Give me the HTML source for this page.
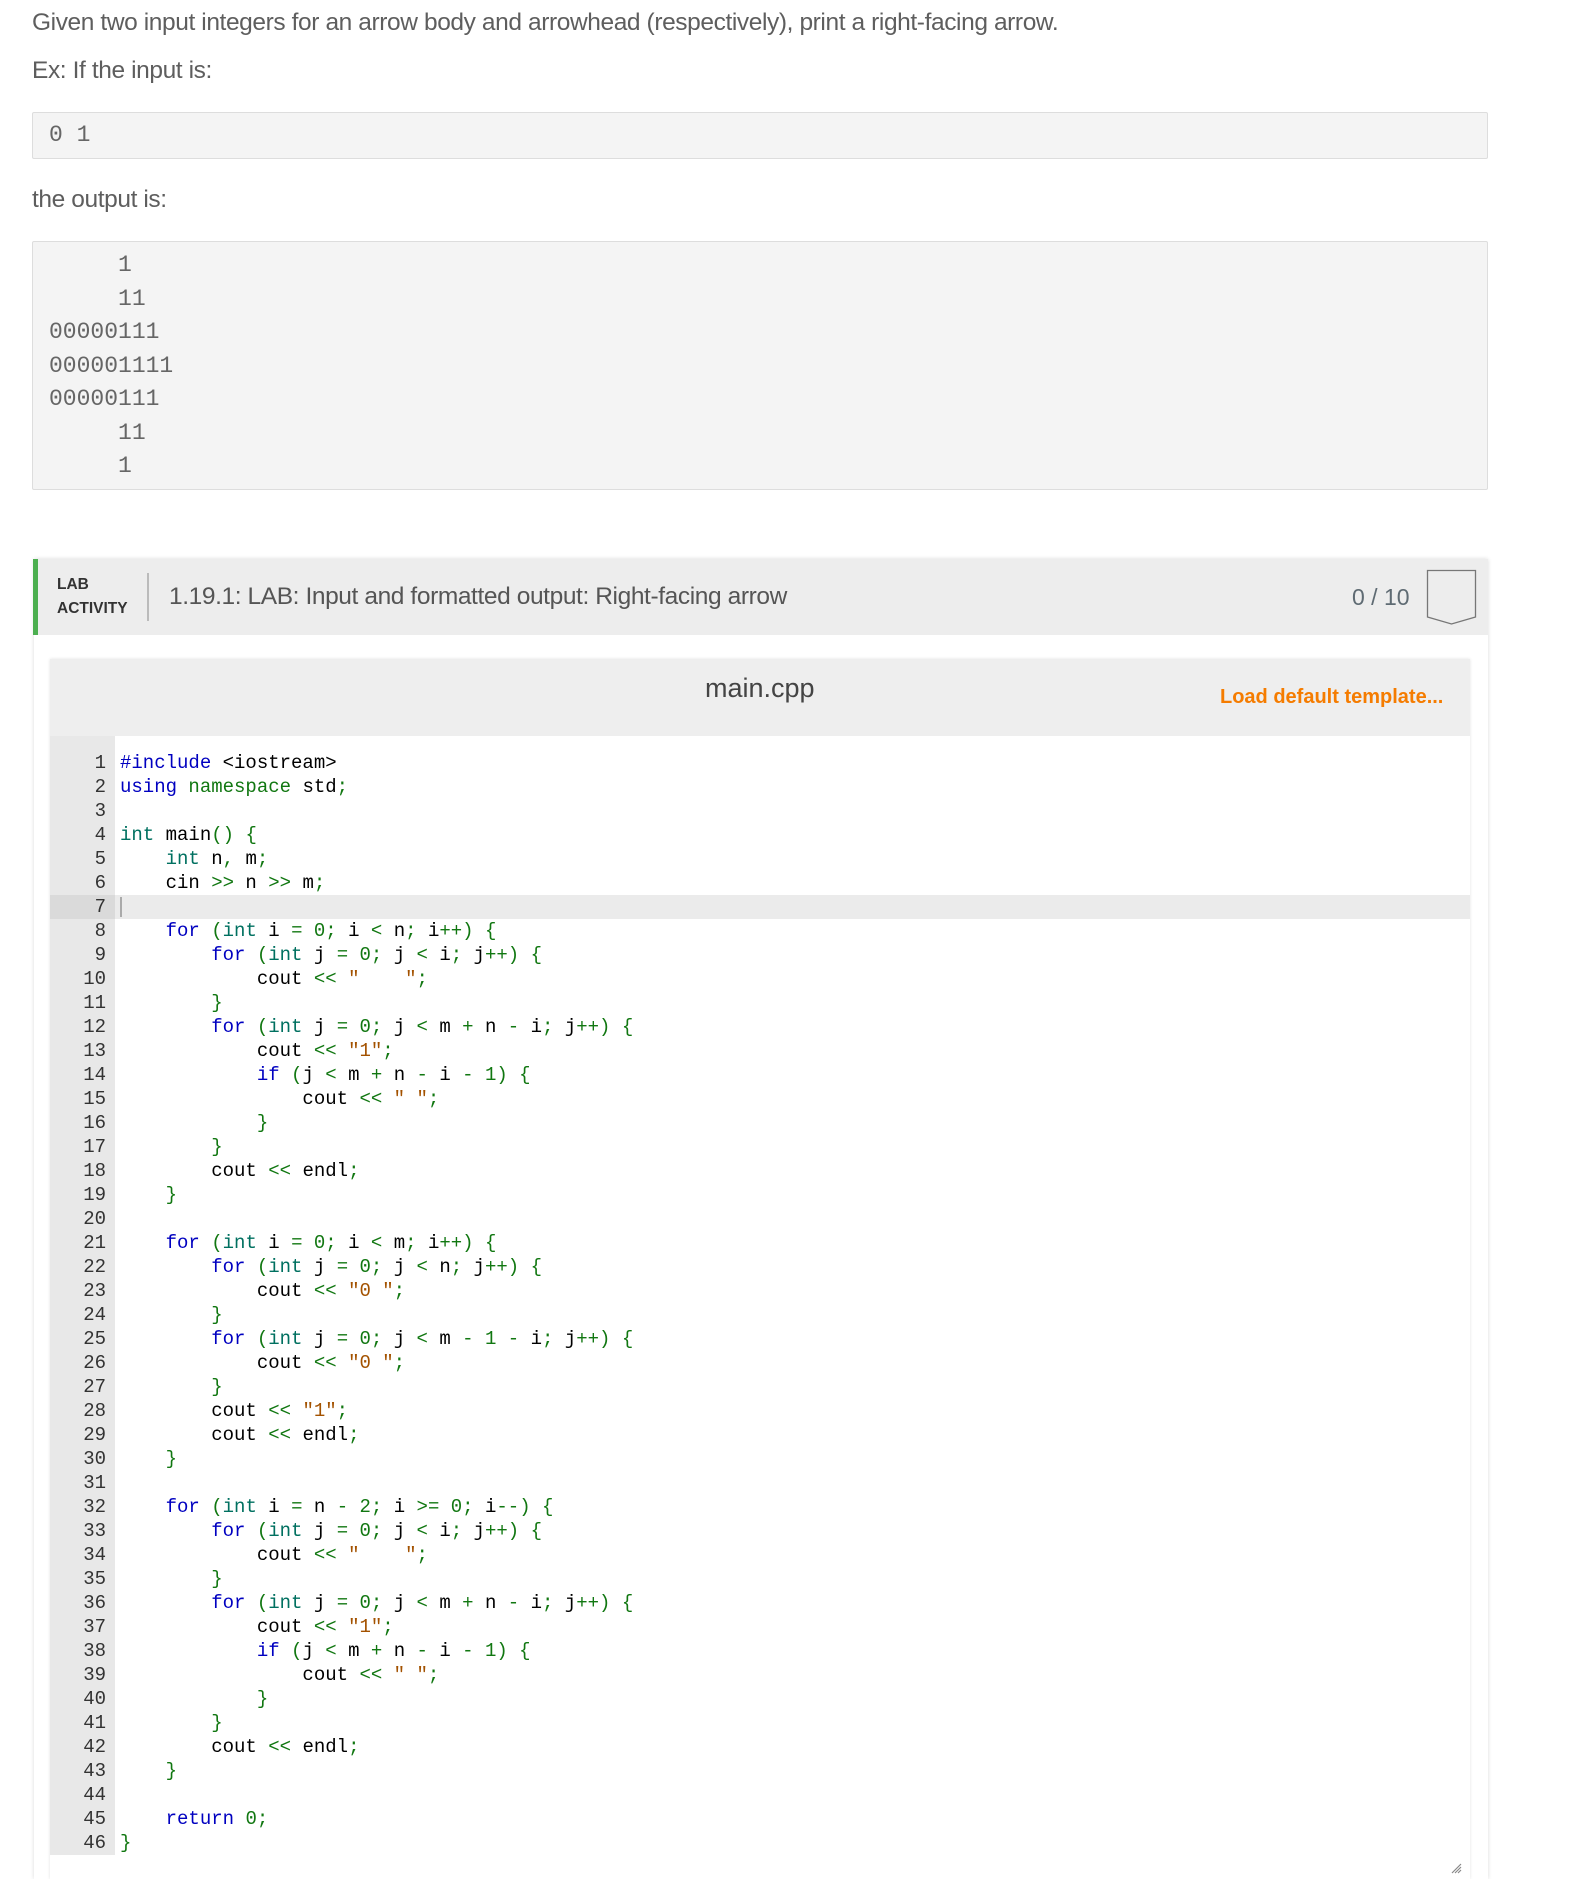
<!DOCTYPE html>
<html><head><meta charset="utf-8"><style>
*{margin:0;padding:0;box-sizing:border-box}
body{width:1572px;height:1879px;background:#fff;font-family:"Liberation Sans",sans-serif;color:#555;position:relative;overflow:hidden}
.abs{position:absolute}
p.t{position:absolute;left:32px;font-size:24.5px;color:#5e5e5e;letter-spacing:-0.4px}
.box{position:absolute;left:32px;width:1456px;background:#f4f4f4;border:1px solid #ddd;border-radius:2px;font-family:"Liberation Mono",monospace;font-size:23px;color:#666}
.out div{height:33.5px;line-height:33.5px;white-space:pre}
.code{position:absolute;font-family:"Liberation Mono",monospace;font-size:19px;color:#000}
.ln{height:24px;line-height:24px;white-space:pre;position:relative}
.ln .n{display:inline-block;width:65px;background:#e8e8e8;text-align:right;padding-right:9px;color:#333}
.ln .c{padding-left:5px}
.b{color:#0000c0}.g{color:#117711}.t{color:#007060}.s{color:#a35200}
</style></head><body>
<p class="t" style="top:9px">Given two input integers for an arrow body and arrowhead (respectively), print a right-facing arrow.</p>
<p class="t" style="top:57px">Ex: If the input is:</p>
<div class="box" style="top:112px;height:47px;line-height:45px;padding-left:16px">0 1</div>
<p class="t" style="top:186px">the output is:</p>
<div class="box out" style="top:241px;height:249px;padding:7px 0 0 16px">
<div>     1</div><div>     11</div><div>00000111</div><div>000001111</div><div>00000111</div><div>     11</div><div>     1</div>
</div>
<div class="abs" style="left:34px;top:559px;width:1454px;height:1320px;box-shadow:0 0 4px rgba(0,0,0,.15)"></div>
<div class="abs" style="left:33px;top:559px;width:1455px;height:76px;background:#ededed;border-left:5px solid #4caf50"></div>
<div class="abs" style="left:57px;top:573px;font-size:15.5px;font-weight:bold;color:#333;line-height:24px">LAB<br>ACTIVITY</div>
<div class="abs" style="left:147px;top:573px;width:2px;height:48px;background:#bbb"></div>
<div class="abs" style="left:169px;top:583px;font-size:24.5px;color:#555;letter-spacing:-0.4px">1.19.1: LAB: Input and formatted output: Right-facing arrow</div>
<div class="abs" style="left:1352px;top:584px;font-size:23px;color:#5f6b73">0 / 10</div>
<svg class="abs" style="left:1424px;top:568px" width="56" height="60"><path d="M3.5 2.5H51.5V49L27.5 56L3.5 49Z" fill="none" stroke="#777" stroke-width="1.3"/></svg>
<div class="abs" style="left:50px;top:659px;width:1420px;height:1220px;box-shadow:0 0 3px rgba(0,0,0,.12)"></div>
<div class="abs" style="left:50px;top:659px;width:1420px;height:77px;background:#eee"></div>
<div class="abs" style="left:705px;top:673px;font-size:27px;color:#444">main.cpp</div>
<div class="abs" style="left:1220px;top:686px;font-size:20px;font-weight:bold;color:#f57c00">Load default template...</div>
<div class="abs" style="left:50px;top:736px;width:65px;height:1110px;background:#e8e8e8"></div>
<div class="abs" style="left:50px;top:895px;width:1420px;height:24px;background:#ebebeb"></div>
<div class="abs" style="left:50px;top:895px;width:65px;height:24px;background:#dadada"></div>
<div class="abs" style="left:120px;top:897px;width:2px;height:20px;background:#aaa"></div>
<div class="code" style="left:50px;top:751px">
<div class="ln"><span class="n">1</span><span class="c"><span class="b">#include</span> &lt;iostream&gt;</span></div>
<div class="ln"><span class="n">2</span><span class="c"><span class="b">using</span> <span class="g">namespace</span> std<span class="g">;</span></span></div>
<div class="ln"><span class="n">3</span><span class="c"></span></div>
<div class="ln"><span class="n">4</span><span class="c"><span class="t">int</span> main<span class="g">() {</span></span></div>
<div class="ln"><span class="n">5</span><span class="c">    <span class="t">int</span> n<span class="g">,</span> m<span class="g">;</span></span></div>
<div class="ln"><span class="n">6</span><span class="c">    cin <span class="g">&gt;&gt;</span> n <span class="g">&gt;&gt;</span> m<span class="g">;</span></span></div>
<div class="ln"><span class="n" style="background:transparent">7</span><span class="c"></span></div>
<div class="ln"><span class="n">8</span><span class="c">    <span class="b">for</span> <span class="g">(</span><span class="t">int</span> i <span class="g">=</span> <span class="g">0;</span> i <span class="g">&lt;</span> n<span class="g">;</span> i<span class="g">++) {</span></span></div>
<div class="ln"><span class="n">9</span><span class="c">        <span class="b">for</span> <span class="g">(</span><span class="t">int</span> j <span class="g">=</span> <span class="g">0;</span> j <span class="g">&lt;</span> i<span class="g">;</span> j<span class="g">++) {</span></span></div>
<div class="ln"><span class="n">10</span><span class="c">            cout <span class="g">&lt;&lt;</span> <span class="s">"    "</span><span class="g">;</span></span></div>
<div class="ln"><span class="n">11</span><span class="c">        <span class="g">}</span></span></div>
<div class="ln"><span class="n">12</span><span class="c">        <span class="b">for</span> <span class="g">(</span><span class="t">int</span> j <span class="g">=</span> <span class="g">0;</span> j <span class="g">&lt;</span> m <span class="g">+</span> n <span class="g">-</span> i<span class="g">;</span> j<span class="g">++) {</span></span></div>
<div class="ln"><span class="n">13</span><span class="c">            cout <span class="g">&lt;&lt;</span> <span class="s">"1"</span><span class="g">;</span></span></div>
<div class="ln"><span class="n">14</span><span class="c">            <span class="b">if</span> <span class="g">(</span>j <span class="g">&lt;</span> m <span class="g">+</span> n <span class="g">-</span> i <span class="g">-</span> <span class="g">1) {</span></span></div>
<div class="ln"><span class="n">15</span><span class="c">                cout <span class="g">&lt;&lt;</span> <span class="s">" "</span><span class="g">;</span></span></div>
<div class="ln"><span class="n">16</span><span class="c">            <span class="g">}</span></span></div>
<div class="ln"><span class="n">17</span><span class="c">        <span class="g">}</span></span></div>
<div class="ln"><span class="n">18</span><span class="c">        cout <span class="g">&lt;&lt;</span> endl<span class="g">;</span></span></div>
<div class="ln"><span class="n">19</span><span class="c">    <span class="g">}</span></span></div>
<div class="ln"><span class="n">20</span><span class="c"></span></div>
<div class="ln"><span class="n">21</span><span class="c">    <span class="b">for</span> <span class="g">(</span><span class="t">int</span> i <span class="g">=</span> <span class="g">0;</span> i <span class="g">&lt;</span> m<span class="g">;</span> i<span class="g">++) {</span></span></div>
<div class="ln"><span class="n">22</span><span class="c">        <span class="b">for</span> <span class="g">(</span><span class="t">int</span> j <span class="g">=</span> <span class="g">0;</span> j <span class="g">&lt;</span> n<span class="g">;</span> j<span class="g">++) {</span></span></div>
<div class="ln"><span class="n">23</span><span class="c">            cout <span class="g">&lt;&lt;</span> <span class="s">"0 "</span><span class="g">;</span></span></div>
<div class="ln"><span class="n">24</span><span class="c">        <span class="g">}</span></span></div>
<div class="ln"><span class="n">25</span><span class="c">        <span class="b">for</span> <span class="g">(</span><span class="t">int</span> j <span class="g">=</span> <span class="g">0;</span> j <span class="g">&lt;</span> m <span class="g">-</span> <span class="g">1</span> <span class="g">-</span> i<span class="g">;</span> j<span class="g">++) {</span></span></div>
<div class="ln"><span class="n">26</span><span class="c">            cout <span class="g">&lt;&lt;</span> <span class="s">"0 "</span><span class="g">;</span></span></div>
<div class="ln"><span class="n">27</span><span class="c">        <span class="g">}</span></span></div>
<div class="ln"><span class="n">28</span><span class="c">        cout <span class="g">&lt;&lt;</span> <span class="s">"1"</span><span class="g">;</span></span></div>
<div class="ln"><span class="n">29</span><span class="c">        cout <span class="g">&lt;&lt;</span> endl<span class="g">;</span></span></div>
<div class="ln"><span class="n">30</span><span class="c">    <span class="g">}</span></span></div>
<div class="ln"><span class="n">31</span><span class="c"></span></div>
<div class="ln"><span class="n">32</span><span class="c">    <span class="b">for</span> <span class="g">(</span><span class="t">int</span> i <span class="g">=</span> n <span class="g">-</span> <span class="g">2;</span> i <span class="g">&gt;=</span> <span class="g">0;</span> i<span class="g">--) {</span></span></div>
<div class="ln"><span class="n">33</span><span class="c">        <span class="b">for</span> <span class="g">(</span><span class="t">int</span> j <span class="g">=</span> <span class="g">0;</span> j <span class="g">&lt;</span> i<span class="g">;</span> j<span class="g">++) {</span></span></div>
<div class="ln"><span class="n">34</span><span class="c">            cout <span class="g">&lt;&lt;</span> <span class="s">"    "</span><span class="g">;</span></span></div>
<div class="ln"><span class="n">35</span><span class="c">        <span class="g">}</span></span></div>
<div class="ln"><span class="n">36</span><span class="c">        <span class="b">for</span> <span class="g">(</span><span class="t">int</span> j <span class="g">=</span> <span class="g">0;</span> j <span class="g">&lt;</span> m <span class="g">+</span> n <span class="g">-</span> i<span class="g">;</span> j<span class="g">++) {</span></span></div>
<div class="ln"><span class="n">37</span><span class="c">            cout <span class="g">&lt;&lt;</span> <span class="s">"1"</span><span class="g">;</span></span></div>
<div class="ln"><span class="n">38</span><span class="c">            <span class="b">if</span> <span class="g">(</span>j <span class="g">&lt;</span> m <span class="g">+</span> n <span class="g">-</span> i <span class="g">-</span> <span class="g">1) {</span></span></div>
<div class="ln"><span class="n">39</span><span class="c">                cout <span class="g">&lt;&lt;</span> <span class="s">" "</span><span class="g">;</span></span></div>
<div class="ln"><span class="n">40</span><span class="c">            <span class="g">}</span></span></div>
<div class="ln"><span class="n">41</span><span class="c">        <span class="g">}</span></span></div>
<div class="ln"><span class="n">42</span><span class="c">        cout <span class="g">&lt;&lt;</span> endl<span class="g">;</span></span></div>
<div class="ln"><span class="n">43</span><span class="c">    <span class="g">}</span></span></div>
<div class="ln"><span class="n">44</span><span class="c"></span></div>
<div class="ln"><span class="n">45</span><span class="c">    <span class="b">return</span> <span class="g">0;</span></span></div>
<div class="ln"><span class="n">46</span><span class="c"><span class="g">}</span></span></div>
</div>
<svg class="abs" style="left:1450px;top:1862px" width="12" height="12"><path d="M2 11L11 2M5 11L11 5M8 11L11 8" stroke="#888" stroke-width="1.2"/></svg>
</body></html>
